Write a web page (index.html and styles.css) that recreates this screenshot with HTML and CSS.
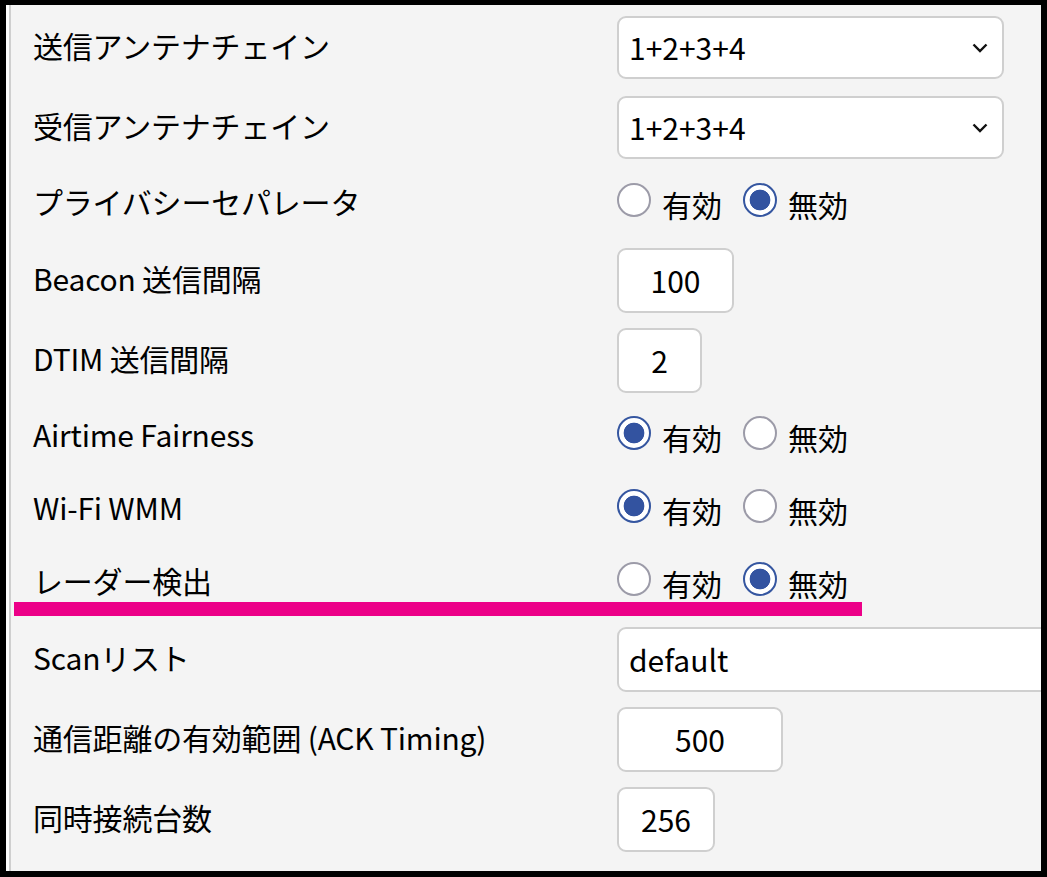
FILE: index.html
```html
<!DOCTYPE html>
<html lang="ja">
<head>
<meta charset="utf-8">
<title>設定</title>
<link rel="stylesheet" href="styles.css">
</head>
<body>
<div class="frame">
  <div class="panel">
    <div class="row">
      <div class="label">送信アンテナチェイン</div>
      <div class="control">
        <div class="select"><span>1+2+3+4</span>
          <svg class="chev" width="16" height="10" viewBox="0 0 16 10"><path d="M1.5 1.5 L8 8 L14.5 1.5" fill="none" stroke="#111" stroke-width="2.4"/></svg>
        </div>
      </div>
    </div>
    <div class="row">
      <div class="label">受信アンテナチェイン</div>
      <div class="control">
        <div class="select"><span>1+2+3+4</span>
          <svg class="chev" width="16" height="10" viewBox="0 0 16 10"><path d="M1.5 1.5 L8 8 L14.5 1.5" fill="none" stroke="#111" stroke-width="2.4"/></svg>
        </div>
      </div>
    </div>
    <div class="row radio-row">
      <div class="label">プライバシーセパレータ</div>
      <div class="control radios">
        <span class="radio"></span><span class="opt">有効</span>
        <span class="radio on"></span><span class="opt">無効</span>
      </div>
    </div>
    <div class="row">
      <div class="label">Beacon 送信間隔</div>
      <div class="control"><div class="field w-beacon">100</div></div>
    </div>
    <div class="row">
      <div class="label">DTIM 送信間隔</div>
      <div class="control"><div class="field w-dtim">2</div></div>
    </div>
    <div class="row radio-row">
      <div class="label">Airtime Fairness</div>
      <div class="control radios">
        <span class="radio on"></span><span class="opt">有効</span>
        <span class="radio"></span><span class="opt">無効</span>
      </div>
    </div>
    <div class="row radio-row">
      <div class="label">Wi-Fi WMM</div>
      <div class="control radios">
        <span class="radio on"></span><span class="opt">有効</span>
        <span class="radio"></span><span class="opt">無効</span>
      </div>
    </div>
    <div class="row radio-row marked">
      <div class="label">レーダー検出</div>
      <div class="control radios">
        <span class="radio"></span><span class="opt">有効</span>
        <span class="radio on"></span><span class="opt">無効</span>
      </div>
    </div>
    <div class="row">
      <div class="label">Scanリスト</div>
      <div class="control"><div class="field w-scan">default</div></div>
    </div>
    <div class="row">
      <div class="label">通信距離の有効範囲 (ACK Timing)</div>
      <div class="control"><div class="field w-ack">500</div></div>
    </div>
    <div class="row">
      <div class="label">同時接続台数</div>
      <div class="control"><div class="field w-max">256</div></div>
    </div>
  </div>
</div>
</body>
</html>
```

FILE: styles.css
```css
html, body {
  margin: 0;
  padding: 0;
  background: #000;
}
body {
  font-family: "Noto Sans CJK JP", "Noto Sans", sans-serif;
  font-size: 30px;
  color: #000;
}
.frame {
  box-sizing: border-box;
  width: 1047px;
  height: 877px;
  border-style: solid;
  border-color: #000;
  border-width: 5px 6px 6px 6px;
  background: #fff;
  display: flex;
}
.panel {
  flex: 1;
  margin-left: 3px;
  border-left: 2px solid #cfcfcf;
  background: #f4f4f4;
  padding-top: 2px;
  position: relative;
  overflow: hidden;
}
.row {
  display: grid;
  grid-template-columns: 584px 1fr;
  align-items: center;
  height: 80px;
  padding-left: 22px;
  position: relative;
}
.radio-row {
  height: 73px;
}
.label {
  line-height: 1.2;
  white-space: nowrap;
  margin-bottom: 5px;
  letter-spacing: -0.2px;
}
.control {
  display: flex;
  align-items: center;
  min-width: 0;
}
.select {
  box-sizing: border-box;
  width: 387px;
  height: 63px;
  background: #fff;
  border: 2px solid #cfcfcf;
  border-radius: 9px;
  display: flex;
  align-items: center;
  justify-content: space-between;
  padding: 0 14px 0 10px;
  flex: none;
}
.chev {
  display: block;
  margin-top: 2px;
}
.field {
  box-sizing: border-box;
  height: 65px;
  background: #fff;
  border: 2px solid #cfcfcf;
  border-radius: 9px;
  display: flex;
  align-items: center;
  justify-content: center;
  flex: none;
}
.w-beacon { width: 117px; }
.w-dtim { width: 85px; }
.w-ack { width: 166px; }
.w-max { width: 98px; }
.w-scan {
  width: 500px;
  justify-content: flex-start;
  padding-left: 10px;
}
.radios {
  height: 100%;
}
.radio {
  box-sizing: border-box;
  width: 34px;
  height: 34px;
  border-radius: 50%;
  border: 2px solid #9c9ba8;
  background: #fff;
  margin-bottom: 7px;
  flex: none;
}
.radio.on {
  border: 2.5px solid #3556a0;
  background: radial-gradient(circle, #3353a0 0 10px, #fff 10.7px);
}
.opt {
  margin-left: 11px;
  margin-right: 21px;
  line-height: 1.2;
}
.marked::after {
  content: "";
  position: absolute;
  left: 3px;
  top: 56px;
  width: 848px;
  height: 14px;
  background: #ec0088;
}
```
